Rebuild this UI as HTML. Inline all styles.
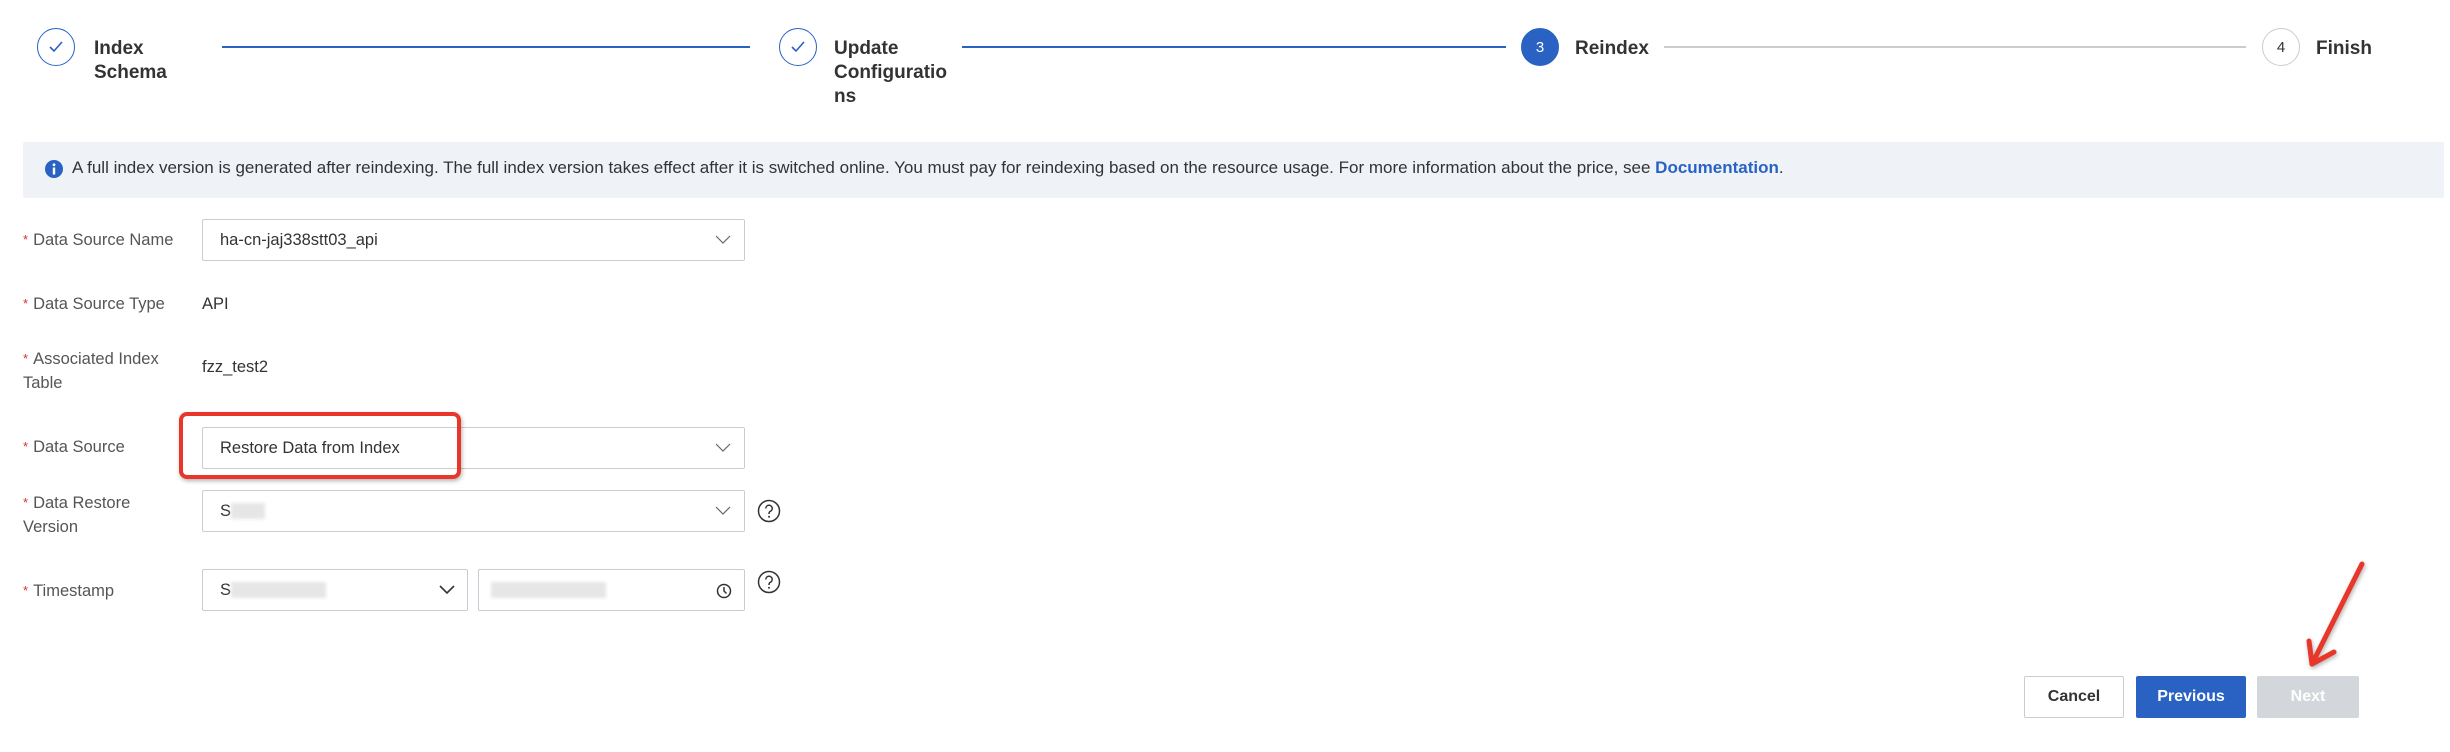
<!DOCTYPE html>
<html><head><meta charset="utf-8"><style>
*{margin:0;padding:0;box-sizing:border-box}
body{width:2450px;height:752px;background:#fff;font-family:"Liberation Sans",sans-serif;color:#333;position:relative;overflow:hidden}
.a{position:absolute}
.circ{position:absolute;width:38px;height:38px;border-radius:50%;border:1.5px solid #2a62c4;display:flex;align-items:center;justify-content:center;font-size:15px}
.st{position:absolute;font-size:19px;font-weight:bold;color:#333;line-height:24px}
.line{position:absolute;height:2px;top:46px}
.lbl{position:absolute;left:23px;font-size:16.5px;color:#555;line-height:24px}
.lbl b{color:#d93026;font-weight:normal;margin-right:5px;font-size:13px;vertical-align:top}
.box{position:absolute;border:1px solid #c9ccd1;border-radius:2px;background:#fff;font-size:16.5px;color:#333;padding-left:17px;display:flex;align-items:center}
.chev{position:absolute;right:13px;top:14px}
.blur{display:inline-block;background:#e6e6e6;height:16px;filter:blur(1.5px)}
.btn{position:absolute;top:676px;height:42px;border-radius:2px;font-size:16px;font-weight:bold;display:flex;align-items:center;justify-content:center}
</style></head><body>
<div class="circ" style="left:37px;top:28px"><svg width="16" height="14" viewBox="0 0 16 14"><path d="M2 7 L6 11 L14 2" fill="none" stroke="#2a62c4" stroke-width="1.6"/></svg></div>
<div class="st" style="left:94px;top:37px">Index<br>Schema</div>
<div class="line" style="left:222px;width:528px;background:#2a62c4"></div>
<div class="circ" style="left:779px;top:28px"><svg width="16" height="14" viewBox="0 0 16 14"><path d="M2 7 L6 11 L14 2" fill="none" stroke="#2a62c4" stroke-width="1.6"/></svg></div>
<div class="st" style="left:834px;top:37px">Update<br>Configuratio<br>ns</div>
<div class="line" style="left:962px;width:544px;background:#2a62c4"></div>
<div class="circ" style="left:1521px;top:28px;background:#2a62c4;color:#fff">3</div>
<div class="st" style="left:1575px;top:37px">Reindex</div>
<div class="line" style="left:1664px;width:582px;background:#ccc"></div>
<div class="circ" style="left:2262px;top:28px;border-color:#ccc;color:#333">4</div>
<div class="st" style="left:2316px;top:37px">Finish</div>
<div class="a" style="left:23px;top:142px;width:2421px;height:56px;background:#eff3f8;border-radius:2px"></div>
<svg class="a" style="left:45px;top:160px" width="18" height="18" viewBox="0 0 18 18"><circle cx="9" cy="9" r="9" fill="#2a62c4"/><circle cx="9" cy="4.8" r="1.4" fill="#fff"/><rect x="7.8" y="7.5" width="2.4" height="7" fill="#fff"/></svg>
<div class="a" style="left:72px;top:158px;font-size:17px;color:#333;line-height:20px;white-space:nowrap">A full index version is generated after reindexing. The full index version takes effect after it is switched online. You must pay for reindexing based on the resource usage. For more information about the price, see <span style="color:#2a62c4;font-weight:bold">Documentation</span>.</div>
<div class="lbl" style="top:228px"><b>*</b>Data Source Name</div>
<div class="box" style="left:202px;top:219px;width:543px;height:42px">ha-cn-jaj338stt03_api<svg class="chev" width="16" height="12" viewBox="0 0 16 12"><path d="M1 2 L8 9 L15 2" fill="none" stroke="#666" stroke-width="1.2"/></svg></div>
<div class="lbl" style="top:292px"><b>*</b>Data Source Type</div>
<div class="a" style="left:202px;top:292px;font-size:16.5px;line-height:24px">API</div>
<div class="lbl" style="top:347px"><b>*</b>Associated Index<br>Table</div>
<div class="a" style="left:202px;top:355px;font-size:16.5px;line-height:24px">fzz_test2</div>
<div class="lbl" style="top:435px"><b>*</b>Data Source</div>
<div class="box" style="left:202px;top:427px;width:543px;height:42px">Restore Data from Index<svg class="chev" width="16" height="12" viewBox="0 0 16 12"><path d="M1 2 L8 9 L15 2" fill="none" stroke="#666" stroke-width="1.2"/></svg></div>
<div class="a" style="left:179px;top:412px;width:282px;height:67px;border:4px solid #e8372a;border-radius:8px;box-shadow:1px 2px 4px rgba(0,0,0,.3)"></div>
<div class="lbl" style="top:491px"><b>*</b>Data Restore<br>Version</div>
<div class="box" style="left:202px;top:490px;width:543px;height:42px">S<span class="blur" style="width:34px"></span><svg class="chev" width="16" height="12" viewBox="0 0 16 12"><path d="M1 2 L8 9 L15 2" fill="none" stroke="#666" stroke-width="1.2"/></svg></div>
<svg class="a" style="left:757px;top:499px" width="24" height="24" viewBox="0 0 24 24"><circle cx="12" cy="12" r="10.5" fill="none" stroke="#333" stroke-width="1.5"/><path d="M8.8 9.5 A3.2 3.2 0 1 1 13 12.5 C12 13 12 13.8 12 15" fill="none" stroke="#333" stroke-width="1.5"/><circle cx="12" cy="17.8" r="1" fill="#333"/></svg>
<div class="lbl" style="top:579px"><b>*</b>Timestamp</div>
<div class="box" style="left:202px;top:569px;width:266px;height:42px">S<span class="blur" style="width:95px"></span><svg class="chev" width="16" height="12" viewBox="0 0 16 12" style="right:12px"><path d="M1 2 L8 9 L15 2" fill="none" stroke="#333" stroke-width="1.6"/></svg></div>
<div class="box" style="left:478px;top:569px;width:267px;height:42px;padding-left:12px"><span class="blur" style="width:115px"></span><svg class="a" style="right:12px;top:13px" width="16" height="16" viewBox="0 0 16 16"><circle cx="8" cy="8" r="6.5" fill="none" stroke="#333" stroke-width="1.5"/><path d="M8 4 V8 L10.5 10.5" fill="none" stroke="#333" stroke-width="1.5"/></svg></div>
<svg class="a" style="left:757px;top:570px" width="24" height="24" viewBox="0 0 24 24"><circle cx="12" cy="12" r="10.5" fill="none" stroke="#333" stroke-width="1.5"/><path d="M8.8 9.5 A3.2 3.2 0 1 1 13 12.5 C12 13 12 13.8 12 15" fill="none" stroke="#333" stroke-width="1.5"/><circle cx="12" cy="17.8" r="1" fill="#333"/></svg>
<div class="btn" style="left:2024px;width:100px;border:1px solid #c9ccd1;color:#333;background:#fff">Cancel</div>
<div class="btn" style="left:2136px;width:110px;background:#2a62c4;color:#fff">Previous</div>
<div class="btn" style="left:2257px;width:102px;background:#d3d6da;color:#fff">Next</div>
<svg class="a" style="left:0;top:0" width="2450" height="752"><g fill="none" stroke="#e8372a" stroke-width="5" stroke-linecap="round" stroke-linejoin="round" style="filter:drop-shadow(1px 2px 2px rgba(0,0,0,.3))"><path d="M2362 564 L2312 664"/><path d="M2309 641 L2312 664 L2334 652"/></g></svg>
</body></html>
